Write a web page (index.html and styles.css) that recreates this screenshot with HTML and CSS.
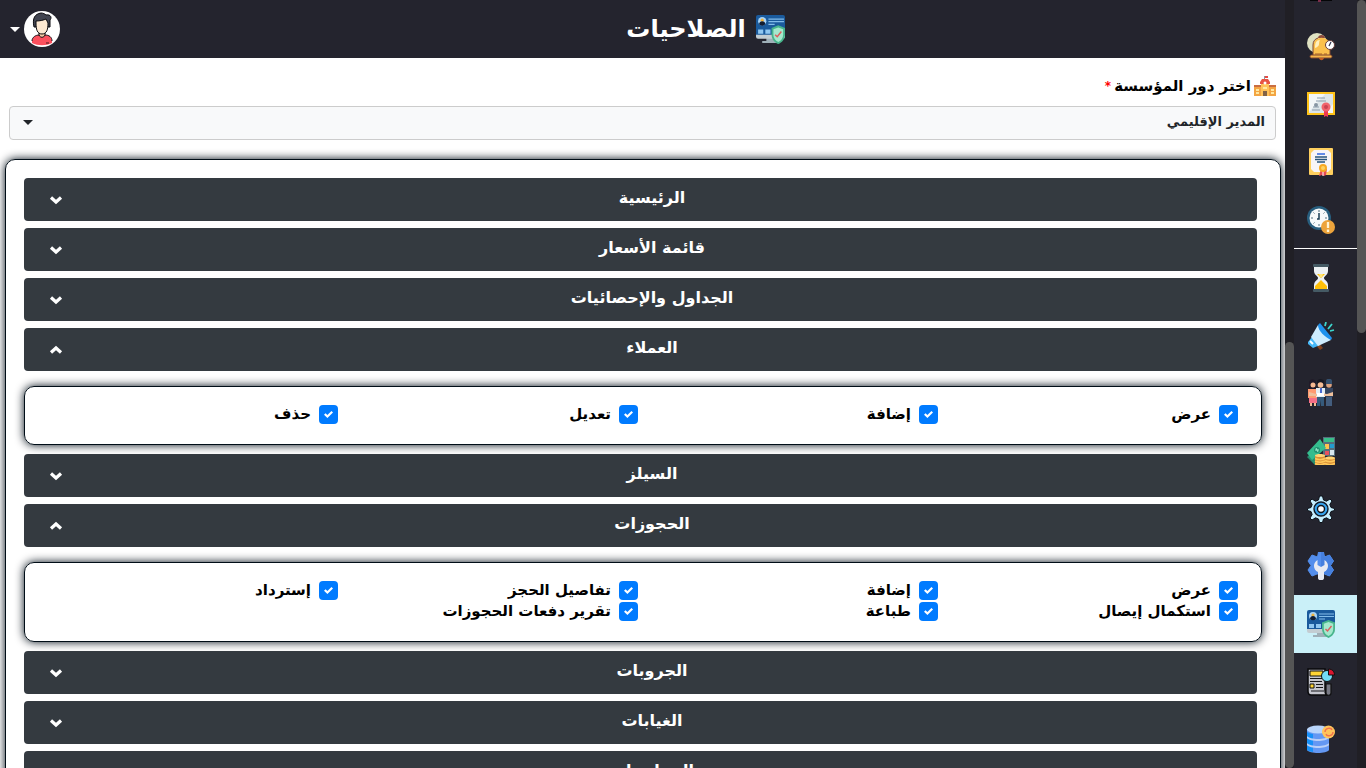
FILE: index.html
```html
<!DOCTYPE html>
<html lang="ar" dir="rtl">
<head>
<meta charset="utf-8">
<meta name="viewport" content="width=device-width, initial-scale=1">
<title>الصلاحيات</title>
<link rel="stylesheet" href="styles.css">
</head>
<body>
<svg class="defs" aria-hidden="true">
  <symbol id="access" viewBox="0 0 28 28">
    <path d="M10 21h9v4h3v2H6v-2h4z" fill="#9fb0b8"/>
    <path d="M0 18h28v3a2 2 0 0 1-2 2H2a2 2 0 0 1-2-2z" fill="#c3cdd2"/>
    <path d="M2 0h24a2 2 0 0 1 2 2v17H0V2a2 2 0 0 1 2-2z" fill="#1a5a9c"/>
    <circle cx="6" cy="6" r="4" fill="#a9d4f7"/><circle cx="6" cy="5" r="1.6" fill="#efb13d"/><path d="M3 9c0-4 6-4 6 0a4 4 0 0 1-6 0z" fill="#111d33"/>
    <path d="M12 4h15M12 6.500h15M12 9h6" stroke="#82bce9" stroke-width="1.2"/>
    <path d="M2 14h5v4H2zm7 0h5v4H9z" fill="#90c7f1"/>
    <path d="M21.500 10 28 12.500v6c0 5-3 8-6.500 9.500-3.500-1.500-6.500-4.500-6.500-9.500v-6z" fill="#48b58c"/>
    <path d="m21.500 12 4.700 1.800v5c0 3.700-1.700 5.700-4.700 7.200-3-1.500-4.700-3.500-4.700-7.200v-5z" fill="#a5e8cd"/>
    <path d="m18.500 19 2 2 4-5" fill="none" stroke="#dc5d5d" stroke-width="1.400"/>
  </symbol>
  <symbol id="down" viewBox="0 0 14 10"><path d="m2 2.500 5 4.500 5-4.500" fill="none" stroke="currentColor" stroke-width="3.200"/></symbol>
  <symbol id="up" viewBox="0 0 14 10"><path d="m2 7.500 5-4.500 5 4.500" fill="none" stroke="currentColor" stroke-width="3.200"/></symbol>
</svg>

<div class="track" aria-hidden="true"><div class="thumb thumb-top"></div></div>

<nav class="sidebar" aria-label="القائمة">
  <div class="tail"><svg viewBox="0 0 28 2"><path d="M3 0h22v1H3z" fill="#050507"/><path d="M11 0h3v2h-3z" fill="#7c2d4a"/></svg></div>
  <a href="#reminders" aria-label="التنبيهات"><svg viewBox="0 0 28 28">
    <circle cx="10" cy="10" r="10" fill="#dfe2c2"/><path d="M11 5c0-4 7-4 7 0" fill="#8b4a3b"/>
    <path d="M6 22v-9c0-11 17-11 17 0v9z" fill="#fbc04c"/><path d="M8 15c0-5 1-8 5-8-2 3 1 6-5 8z" fill="#fff0bd"/>
    <path d="M6 22V12c0-4 2-6 5-7M23 22v-6" fill="none" stroke="#7e4631"/><rect x="3" y="22" width="22" height="3" rx="1.500" fill="#f7b64a" stroke="#7e4631"/><path d="M12 25h5c-1 3-4 3-5 0" fill="#c05c24"/><path d="M8 21h7m2 0h3" stroke="#a45f27"/>
    <circle cx="23" cy="12" r="4.500" fill="#fff" stroke="#673c39"/><path d="m24 9-2 4" stroke="#33364f" stroke-width="1.200"/></svg></a>
  <a href="#certificates" aria-label="الشهادات"><svg viewBox="0 0 28 28">
    <path d="M0 2h28v23H0z" fill="#ffc319"/><path d="M2 4h24v19H2z" fill="#f3f7f8"/><path d="m2 22 16-18h8v10l-8 9H2z" fill="#dce5e9"/>
    <path d="M10 8h8m-9 3h10M6 17h6m-7 3h8" stroke="#8b9dab" stroke-width="1.200"/><circle cx="9" cy="15" r="2" fill="#8796a3"/>
    <path d="M17 18h4v9l-2-1-2 1z" fill="#ef3851"/><circle cx="19" cy="17" r="4.500" fill="#f1646d"/><circle cx="19" cy="17" r="2" fill="#ca4252"/></svg></a>
  <a href="#diplomas" aria-label="الوثائق"><svg viewBox="0 0 28 28">
    <rect x="2" y="0" width="24" height="27" rx="1" fill="#ffd05f"/><path d="M7 2h14l3 3v16l-3 3H7l-3-3V5z" fill="#f8f5f7"/>
    <path d="M10 6h8" stroke="#638be7" stroke-width="2"/><path d="M8 9h12M8 11.500h12M10 14h8" stroke="#28567d" stroke-width="1.300"/>
    <path d="m14 21-2 7 3-1 2 1 2-1 1-6z" fill="#e84c54"/><path d="M16 23v5" stroke="#fff"/><circle cx="16" cy="20" r="4" fill="#f8a923"/><circle cx="16" cy="20" r="2" fill="#ffd160"/></svg></a>
  <a href="#delays" aria-label="التأخير"><svg viewBox="0 0 28 28">
    <circle cx="12" cy="12" r="12" fill="#285e7e"/><circle cx="12" cy="12" r="9.500" fill="#f7fafb"/>
    <path d="M12 4v2m0 12v2M4 12h2m12 0h2M6.500 6.500l1 1m9 9 1 1m0-11-1 1m-9 9-1 1" stroke="#537080"/><path d="M12 7v6h-2" fill="none" stroke="#183c54" stroke-width="1.500"/>
    <circle cx="21" cy="21" r="7" fill="#eda43c"/><path d="M21 16v6m0 1.500V26" stroke="#fff4d4" stroke-width="2.300"/></svg></a>
  <a href="#waiting" class="divided" aria-label="الانتظار"><svg viewBox="0 0 28 28">
    <path d="M7 2h14v5c0 4-4 5-4 7s4 3 4 7v5H7v-5c0-4 4-5 4-7S7 11 7 7z" fill="#edf1f3"/><path d="M10 10h8l-4 4zM8 25v-3l6-6 6 6v3z" fill="#ffc008"/><path d="M12 10h4l-1 3h-2z" fill="#ffe67a"/>
    <rect x="6" y="0" width="16" height="3" rx="1" fill="#455a64"/><rect x="6" y="25" width="16" height="3" rx="1" fill="#455a64"/></svg></a>
  <a href="#campaigns" aria-label="الحملات"><svg viewBox="0 0 28 28">
    <path d="m10 19 6 7-3 2-5-6z" fill="#81421e"/><path d="m1 20 4-5 8 8-7 3-5-4z" fill="#45b8f8"/><path d="m4 15 7-12 13 15-13 6z" fill="#ceedff"/><path d="m11 3 2-2 12 15-1 2C18 15 11 9 11 3z" fill="#2092ed"/><path d="m3 19 3 3" stroke="#fff" stroke-width="2"/>
    <path d="m18 4 1-4m2 7 4-5m-2 7 4-1" stroke="#3dd6cd" stroke-width="1.800"/></svg></a>
  <a href="#staff" aria-label="فريق العمل"><svg viewBox="0 0 28 28">
    <path d="M2 10V4c0-5 7-5 7 0v6z" fill="#211a28"/><circle cx="6" cy="6" r="2.500" fill="#f8b991"/><path d="M1 10h9v9H1z" fill="#ff9a70"/><path d="M2 19h8v5H2z" fill="#f66f87"/><path d="M3 24h2v3H3zm4 0h2v3H7z" fill="#f1bb94"/>
    <path d="M10 5V3c0-4 7-4 7 0v2z" fill="#181923"/><circle cx="13.500" cy="6" r="2.800" fill="#f7bd96"/><path d="M9 9h9v9H9z" fill="#e4edf3"/><path d="M13 9h2v6h-2z" fill="#496ad0"/><path d="M10 18h7v9h-3v-6l-1 6h-3z" fill="#355a7c"/>
    <circle cx="22" cy="6" r="2.800" fill="#dca17e"/><path d="M19 5V2c0-3 6-3 6 0v3z" fill="#35506e"/><path d="M18 9h8v9h-8z" fill="#34445f"/><path d="M19 18h6v9h-6z" fill="#435d7e"/><path d="m2 13 7 2 5-1 6 1 6-2v4H2z" fill="#eec09c"/><path d="M10 14h7v3h-7z" fill="#fff"/></svg></a>
  <a href="#finance" aria-label="المالية"><svg viewBox="0 0 28 28">
    <path d="M16 0h12v19H16z" fill="#566e7c"/><path d="M17 1h10v4H17z" fill="#38bf89"/><path d="M18 7h4v5h-4z" fill="#ffc34f"/><path d="M23 7h4v4h-4z" fill="#239ccf"/><path d="M23 13h4v5h-4z" fill="#d8e7ef"/><path d="M18 14h4v4h-4z" fill="#e8525d"/>
    <path d="m0 20 8-7 8 8-8 7z" fill="#268d6c"/><path d="M0 16 13 2l6 9L5 23z" fill="#35bd8e"/><circle cx="10" cy="13" r="3" fill="#219271"/><path d="m9 11 2 4m-3-2 4 0" stroke="#a2efcf"/>
    <path d="M8 18h10v10H8zm10 3h10v7H18z" fill="#dc9139"/><path d="M8 18.500c0-2 10-2 10 0s-10 2-10 0zM18 21c0-2 10-2 10 0s-10 2-10 0z" fill="#ffd474"/><path d="M8 21.500c3 1.500 7 1.500 10 0M8 24c3 1.500 7 1.500 10 0M8 26.500c3 1.500 7 1.500 10 0m0-3c3 1.500 7 1.500 10 0m-10 3c3 1.500 7 1.500 10 0" fill="none" stroke="#ffc95b" stroke-width="1.500"/></svg></a>
  <a href="#settings" aria-label="الإعدادات"><svg viewBox="0 0 28 28">
    <path d="M12.500 1h3l1 4 3 1.200L23 4l2 2-2.200 3.500 1.200 3 3.500 1v2l-3.500 1-1.200 3L25 23l-2 2-3.500-2.200-3 1.200-1 3.500h-3l-1-3.500-3-1.200L5 25l-2-2 2.200-3.500-1.200-3-3.500-1v-2l3.500-1 1.200-3L3 6l2-2 3.500 2.200 3-1.200z" fill="#c6efff" stroke="#0c1118"/>
    <circle cx="14" cy="14" r="7" fill="#38a4ed" stroke="#111a27" stroke-width="1.400"/><circle cx="14" cy="14" r="3.500" fill="#fff" stroke="#10151c" stroke-width="1.400"/></svg></a>
  <a href="#maintenance" aria-label="الصيانة"><svg viewBox="0 0 28 28">
    <path d="M11.500 0h5l1 5 5-2 4 6-3 4.500 3 4.500-4 6-5-2H10l-5 2-4-6 3-4.500L1 9l4-6 5.500 2z" fill="#538eec" stroke="#538eec" stroke-linejoin="round"/><path d="M14 0h2.500l1 5 5-2 4 6-3 4.500 3 4.500-4 6-5-2H14z" fill="#4680df"/>
    <path d="M10.500 8v5l3.500 2 3.500-2V8c5 3 4.500 10-.5 12v6c0 3-6 3-6 0v-6c-5-2-5.500-9-.5-12z" fill="#e7eaf2"/></svg></a>
  <a href="#permissions" class="active" aria-label="الصلاحيات" aria-current="page"><svg><use href="#access"/></svg></a>
  <a href="#reports" aria-label="التقارير"><svg viewBox="0 0 28 28">
    <path d="M1 1h17v21c0 3 1 5 3 5H4c-2 0-3-2-3-4z" fill="#c5c6ce" stroke="#09090b" stroke-width="1.500"/><path d="M19 16h5v9c0 3-5 3-5 0z" fill="#787984" stroke="#111" stroke-width="1.200"/>
    <path d="M3 3h13v5H3z" fill="#ffd435" stroke="#111"/><path d="M3 10.500h12M3 13.500h12m-6 3h7m-7 3h7M4 23h13" stroke="#17171a" stroke-width="1.200"/><path d="M3 16h4v4H3z" fill="#ffd435" stroke="#111"/>
    <circle cx="20" cy="8" r="5.500" fill="#72daf5" stroke="#111"/><path d="M21.500 1c4 0 6 3 6 6h-6z" fill="#d9162f" stroke="#111"/></svg></a>
  <a href="#data" aria-label="البيانات"><svg viewBox="0 0 28 28">
    <path d="M0 4h22v21c-2 4-20 4-22 0z" fill="#6498f3"/><path d="M0 7c4 2 6 2 6 2v18c-3-1-6-1-6-3z" fill="#1690f8"/><ellipse cx="11" cy="4.500" rx="11" ry="4" fill="#bad6fc"/><path d="M0 11c3 4 19 4 22 0v2c-3 4-19 4-22 0zm0 7c3 4 19 4 22 0v2c-3 4-19 4-22 0z" fill="#b9d0f8"/>
    <circle cx="21.500" cy="7" r="6.500" fill="#ffc45b"/><path d="M18 7c0-4 6-5 7-2m1 2c0 4-6 5-7 2" fill="none" stroke="#f2744d" stroke-width="1.400"/></svg></a>
</nav>

<div class="track" aria-hidden="true"><div class="thumb thumb-bottom"></div></div>

<div class="page">
  <header class="topbar">
    <h1><svg class="title-icon"><use href="#access"/></svg>الصلاحيات</h1>
    <button class="user" type="button" aria-label="حساب المستخدم">
      <svg class="avatar" viewBox="0 0 36 36"><circle cx="18" cy="18" r="18" fill="#fff"/>
        <path d="M15 21h6v6h-6z" fill="#f4c9a3" stroke="#111"/><path d="M8 32v-2c0-4 4-6 7-6 1 3 5 3 6 0 4 0 7 2 7 6v2c-6 3-14 3-20 0z" fill="#fb505d"/><path d="M8 30c0-4 4-6 7-6 1 3 5 3 6 0 4 0 7 2 7 6" fill="none" stroke="#151217"/><path d="M22 32h3" stroke="#44151b"/>
        <path d="M10 16C8 7 11 3 17 2c2 0 4 1 5 2 5-1 6 3 4 5v7z" fill="#414450" stroke="#0b0b0f"/><path d="M12 10c4 0 8-1 10-2l2 4c0 6-1 11-6 11s-6-5-6-11z" fill="#fde9d2" stroke="#0b0b0f"/></svg>
      <span class="caret"></span>
    </button>
  </header>

  <main>
    <form class="role">
      <label for="role"><svg class="school" viewBox="0 0 22 20"><path d="M0 9h7v11H0zm15 0h7v11h-7z" fill="#f3a543"/><path d="M0 9h7v2H0zm15 0h7v2h-7z" fill="#c96e41"/><path d="M7 5h8v15H7z" fill="#ffc25a"/><path d="m6 6 2-3h6l2 3v2H6z" fill="#e75445"/><path d="M11 0h3v2h-3z" fill="#e64c46"/><path d="M10 0h1v3h-1z" fill="#8c979f"/><circle cx="11" cy="7" r="1.500" fill="#fff"/><path d="M2 13h3v2H2zm0 3h3v2H2zm15-3h3v2h-3zm0 3h3v2h-3zM9 11h4v2H9z" fill="#ffe8a0"/><path d="M9 15h4v5H9z" fill="#826246"/></svg><span>اختر دور المؤسسة</span><span class="required">*</span></label>
      <div class="select"><select id="role"><option>المدير الإقليمي</option></select><span class="caret"></span></div>
    </form>

    <section class="permissions">
      <button class="bar" type="button" aria-expanded="false"><span>الرئيسية</span><svg><use href="#down"/></svg></button>
      <button class="bar" type="button" aria-expanded="false"><span>قائمة الأسعار</span><svg><use href="#down"/></svg></button>
      <button class="bar" type="button" aria-expanded="false"><span>الجداول والإحصائيات</span><svg><use href="#down"/></svg></button>
      <button class="bar" type="button" aria-expanded="true"><span>العملاء</span><svg><use href="#up"/></svg></button>
      <div class="options">
        <label><input type="checkbox" checked><span>عرض</span></label>
        <label><input type="checkbox" checked><span>إضافة</span></label>
        <label><input type="checkbox" checked><span>تعديل</span></label>
        <label><input type="checkbox" checked><span>حذف</span></label>
      </div>
      <button class="bar" type="button" aria-expanded="false"><span>السيلز</span><svg><use href="#down"/></svg></button>
      <button class="bar" type="button" aria-expanded="true"><span>الحجوزات</span><svg><use href="#up"/></svg></button>
      <div class="options">
        <label><input type="checkbox" checked><span>عرض</span></label>
        <label><input type="checkbox" checked><span>إضافة</span></label>
        <label><input type="checkbox" checked><span>تفاصيل الحجز</span></label>
        <label><input type="checkbox" checked><span>إسترداد</span></label>
        <label><input type="checkbox" checked><span>استكمال إيصال</span></label>
        <label><input type="checkbox" checked><span>طباعة</span></label>
        <label><input type="checkbox" checked><span>تقرير دفعات الحجوزات</span></label>
      </div>
      <button class="bar" type="button" aria-expanded="false"><span>الجروبات</span><svg><use href="#down"/></svg></button>
      <button class="bar" type="button" aria-expanded="false"><span>الغيابات</span><svg><use href="#down"/></svg></button>
      <button class="bar" type="button" aria-expanded="false"><span>المحاسبات</span><svg><use href="#down"/></svg></button>
    </section>
  </main>
</div>
</body>
</html>
```
FILE: styles.css
```css
* {
  box-sizing: border-box;
}

body {
  display: flex;
  height: 100vh;
  margin: 0;
  overflow: hidden;
  background: #fff;
  color: #000;
  font-family: "DejaVu Sans", sans-serif;
  font-size: 15px;
  font-weight: 700;
}

button,
select {
  font: inherit;
}

.defs {
  position: absolute;
  width: 0;
  height: 0;
}

/* Scroll tracks */
.track {
  display: flex;
  flex: none;
  flex-direction: column;
  width: 9px;
  background: #201f25;
}

.thumb {
  border-radius: 5px;
  background: #555;
}

.thumb-top {
  height: 43.3%;
}

.thumb-bottom {
  height: 55.5%;
  margin-top: auto;
}

/* Side navigation */
.sidebar {
  display: flex;
  flex: none;
  flex-direction: column;
  width: 63px;
  background: #24242e;
}

.sidebar a {
  display: flex;
  flex: 1;
  align-items: center;
  padding-right: 22px;
}

.sidebar svg {
  display: block;
  width: 28px;
  height: 28px;
}

.sidebar .tail {
  height: 18px;
  padding-right: 22px;
}

.sidebar .tail svg {
  height: 2px;
}

.sidebar .divided {
  border-top: 1px solid #fff;
}

.sidebar .active {
  background: #caf0f8;
}

/* Page */
.page {
  flex: 1;
  min-width: 0;
  overflow: hidden;
}

.topbar {
  display: flex;
  align-items: center;
  height: 58px;
  background: #24242e;
  color: #fff;
}

.topbar h1 {
  display: flex;
  flex: 1;
  align-items: center;
  justify-content: center;
  gap: 10px;
  margin: 0;
  font-size: 24px;
  line-height: 32px;
}

.title-icon {
  width: 29px;
  height: 29px;
}

.user {
  display: flex;
  align-items: center;
  justify-content: flex-end;
  gap: 4px;
  width: 126px;
  padding: 0 0 0 10px;
  border: 0;
  background: none;
  color: inherit;
}

.avatar {
  width: 36px;
  height: 36px;
}

.caret {
  border: 5px solid transparent;
  border-top-color: currentColor;
  border-bottom: 0;
}

.role {
  padding: 16px 9px 0;
}

.role label {
  display: flex;
  align-items: center;
  gap: 3px;
  height: 24px;
  margin-bottom: 8px;
}

.school {
  width: 22px;
  height: 20px;
}

.required {
  color: #f00;
  font-size: 12px;
}

.select {
  position: relative;
  color: #212529;
}

.select select {
  display: block;
  width: 100%;
  height: 34px;
  padding: 0 10px 4px;
  border: 1px solid #ccc;
  border-radius: 4px;
  appearance: none;
  background: #f8f9fa;
  color: inherit;
  font-size: 13px;
}

.select .caret {
  position: absolute;
  top: 14px;
  left: 14px;
}

/* Permission groups */
.permissions {
  margin: 19px 4px 0 5px;
  padding: 18px 23px 18px 18px;
  border: 1px solid #000d17;
  border-radius: 10px;
  box-shadow: 0 0 10px #000d17;
}

.bar {
  display: flex;
  align-items: center;
  width: 100%;
  height: 43px;
  margin-bottom: 7px;
  padding: 0 16px 0 25px;
  border: 0;
  border-radius: 4px;
  background: #343a40;
  color: #fff;
  font-size: 16px;
}

.bar span {
  flex: 1;
  padding-bottom: 4px;
}

.bar svg {
  width: 14px;
  height: 10px;
}

.options {
  display: grid;
  grid-template-columns: repeat(4, 1fr);
  row-gap: 2px;
  margin: 15px 0 9px;
  margin-right: -5px;
  padding: 18px 23px 20px 13px;
  border: 1px solid #000d17;
  border-radius: 10px;
  box-shadow: 0 0 10px #000d17;
}

.options label {
  display: flex;
  align-items: center;
  gap: 8px;
  height: 19px;
}

.options span {
  padding-bottom: 2px;
}

.options input {
  display: grid;
  place-content: center;
  width: 19px;
  height: 19px;
  margin: 0;
  border-radius: 4px;
  appearance: none;
  background: #007bff;
}

.options input:checked::before {
  width: 9px;
  height: 7px;
  background: #fff;
  clip-path: polygon(0 52%, 17% 32%, 38% 56%, 83% 0, 100% 20%, 38% 100%);
  content: "";
}
```
